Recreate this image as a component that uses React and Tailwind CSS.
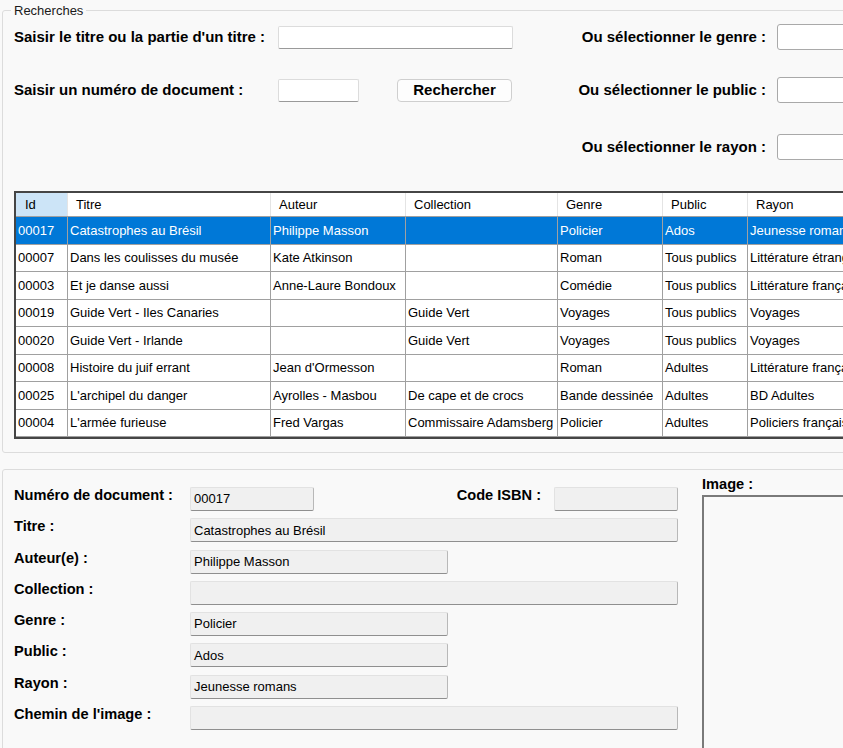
import React from 'react';

const rows = [
  { id: '00017', titre: 'Catastrophes au Brésil', auteur: 'Philippe Masson', collection: '', genre: 'Policier', public: 'Ados', rayon: 'Jeunesse romans' },
  { id: '00007', titre: 'Dans les coulisses du musée', auteur: 'Kate Atkinson', collection: '', genre: 'Roman', public: 'Tous publics', rayon: 'Littérature étrangère' },
  { id: '00003', titre: 'Et je danse aussi', auteur: 'Anne-Laure Bondoux', collection: '', genre: 'Comédie', public: 'Tous publics', rayon: 'Littérature française' },
  { id: '00019', titre: 'Guide Vert - Iles Canaries', auteur: '', collection: 'Guide Vert', genre: 'Voyages', public: 'Tous publics', rayon: 'Voyages' },
  { id: '00020', titre: 'Guide Vert - Irlande', auteur: '', collection: 'Guide Vert', genre: 'Voyages', public: 'Tous publics', rayon: 'Voyages' },
  { id: '00008', titre: 'Histoire du juif errant', auteur: "Jean d'Ormesson", collection: '', genre: 'Roman', public: 'Adultes', rayon: 'Littérature française' },
  { id: '00025', titre: "L'archipel du danger", auteur: 'Ayrolles - Masbou', collection: 'De cape et de crocs', genre: 'Bande dessinée', public: 'Adultes', rayon: 'BD Adultes' },
  { id: '00004', titre: "L'armée furieuse", auteur: 'Fred Vargas', collection: 'Commissaire Adamsberg', genre: 'Policier', public: 'Adultes', rayon: 'Policiers français' },
];

const cols = [
  { key: 'id', label: 'Id', w: 'w-[52px]' },
  { key: 'titre', label: 'Titre', w: 'w-[203px]' },
  { key: 'auteur', label: 'Auteur', w: 'w-[135px]' },
  { key: 'collection', label: 'Collection', w: 'w-[152px]' },
  { key: 'genre', label: 'Genre', w: 'w-[105px]' },
  { key: 'public', label: 'Public', w: 'w-[85px]' },
  { key: 'rayon', label: 'Rayon', w: 'w-[160px]' },
];

const TextBox = ({ w }) => (
  <div className={`${w} h-[23px] bg-white border border-[#dcdcdc] border-b-[#9a9a9a] rounded-[2px]`} />
);

const Combo = () => (
  <div className="w-[100px] h-[26px] bg-white border border-[#a9a9a9] rounded-[3px]" />
);

const ReadBox = ({ w, value }) => (
  <div className={`${w} h-[24px] shrink-0 flex items-center pl-[3px] bg-[#f0f0f0] border border-[#e2e2e2] border-b-[#8f8f8f] border-r-[#b8b8b8] rounded-[2px] text-[13px] text-black`}>
    {value}
  </div>
);

const Label = ({ children }) => (
  <div className="w-[176px] shrink-0 font-bold text-[14.6px] leading-[16px] text-black">{children}</div>
);

const App = () => {
  return (
    <div className="w-[843px] h-[748px] overflow-hidden bg-[#f9f9f9] text-black" style={{ fontFamily: '"Liberation Sans", Arial, sans-serif' }}>
      {/* Recherches group */}
      <fieldset className="ml-[2px] mt-[3px] w-[900px] border border-[#dcdcdc] rounded-[3px] pb-[13px]">
        <legend className="ml-[8px] px-[3px] text-[13px] leading-[15px] text-[#1a1a1a]">Recherches</legend>
        <div className="pt-[6px] pl-[11px]">
          <div className="flex items-center h-[26px]">
            <div className="w-[499px] flex items-center">
              <div className="w-[264px] font-bold text-[15px]">Saisir le titre ou la partie d'un titre :</div>
              <TextBox w="w-[235px]" />
            </div>
            <div className="w-[253px] text-right font-bold text-[15px]">Ou sélectionner le genre :</div>
            <div className="ml-[11px]"><Combo /></div>
          </div>

          <div className="flex items-center h-[26px] mt-[27px]">
            <div className="w-[499px] flex items-center">
              <div className="w-[264px] font-bold text-[15px]">Saisir un numéro de document :</div>
              <TextBox w="w-[81px]" />
              <button className="ml-[38px] w-[115px] h-[23px] bg-[#fdfdfd] border border-[#cfcfcf] rounded-[4px] font-bold text-[15px] leading-[20px]">Rechercher</button>
            </div>
            <div className="w-[253px] text-right font-bold text-[15px]">Ou sélectionner le public :</div>
            <div className="ml-[11px]"><Combo /></div>
          </div>

          <div className="flex items-center h-[26px] mt-[31px]">
            <div className="w-[499px]" />
            <div className="w-[253px] text-right font-bold text-[15px]">Ou sélectionner le rayon :</div>
            <div className="ml-[11px]"><Combo /></div>
          </div>

          {/* data grid */}
          <div className="mt-[31px] w-[900px] border-2 border-[#454545] bg-white overflow-hidden text-[13px]">
            <div className="flex h-[24px] border-b border-[#a0a0a0]">
              {cols.map((c, i) => (
                <div
                  key={c.key}
                  className={`${c.w} shrink-0 flex items-center border-r border-[#e4e4e4] ${i === 0 ? 'bg-[#cce4f7] pl-[9px]' : 'pl-[8px]'}`}
                >
                  {c.label}
                </div>
              ))}
            </div>
            {rows.map((r, idx) => (
              <div
                key={r.id}
                className={`flex h-[27.5px] border-b border-[#a0a0a0] ${idx === 0 ? 'bg-[#0078d7] text-white' : 'bg-white'}`}
              >
                {cols.map((c) => (
                  <div key={c.key} className={`${c.w} shrink-0 flex items-center pl-[2px] border-r border-[#a0a0a0] whitespace-nowrap overflow-hidden`}>
                    {r[c.key]}
                  </div>
                ))}
              </div>
            ))}
          </div>
        </div>
      </fieldset>

      {/* detail group */}
      <fieldset className="ml-[2px] mt-[16px] w-[900px] h-[320px] border border-[#dcdcdc] rounded-[3px]">
        <div className="flex">
          <div className="pl-[11px] pt-[17px] w-[688px] flex flex-col gap-[7.3px]">
            <div className="flex items-start">
              <Label>Numéro de document :</Label>
              <ReadBox w="w-[124px]" value="00017" />
              <div className="w-[240px] shrink-0 text-right pr-[13px] font-bold text-[14.6px] leading-[16px]">Code ISBN :</div>
              <ReadBox w="w-[124px]" value="" />
            </div>
            <div className="flex items-start">
              <Label>Titre :</Label>
              <ReadBox w="w-[488px]" value="Catastrophes au Brésil" />
            </div>
            <div className="flex items-start">
              <Label>Auteur(e) :</Label>
              <ReadBox w="w-[258px]" value="Philippe Masson" />
            </div>
            <div className="flex items-start">
              <Label>Collection :</Label>
              <ReadBox w="w-[488px]" value="" />
            </div>
            <div className="flex items-start">
              <Label>Genre :</Label>
              <ReadBox w="w-[258px]" value="Policier" />
            </div>
            <div className="flex items-start">
              <Label>Public :</Label>
              <ReadBox w="w-[258px]" value="Ados" />
            </div>
            <div className="flex items-start">
              <Label>Rayon :</Label>
              <ReadBox w="w-[258px]" value="Jeunesse romans" />
            </div>
            <div className="flex items-start">
              <Label>Chemin de l'image :</Label>
              <ReadBox w="w-[488px]" value="" />
            </div>
          </div>
          <div className="pl-[11px] pt-[7px]">
            <div className="font-bold text-[14.6px] leading-[15px]">Image :</div>
            <div className="mt-[3px] w-[200px] h-[300px] border-l-2 border-t-2 border-[#7a7a7a]" />
          </div>
        </div>
      </fieldset>
    </div>
  );
};

export default App;
